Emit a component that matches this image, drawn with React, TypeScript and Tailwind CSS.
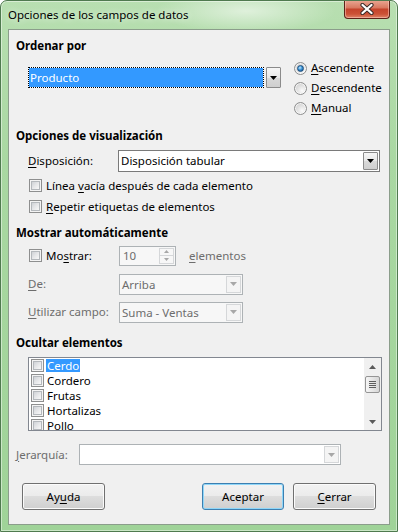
import React from "react";

const Tri = ({ color = "#000", up = false, w = 7, h = 4 }: { color?: string; up?: boolean; w?: number; h?: number }) => (
  <svg width={w} height={h} viewBox={`0 0 ${w} ${h}`} className="block">
    {up ? <path d={`M0 ${h}H${w}L${w / 2} 0Z`} fill={color} /> : <path d={`M0 0H${w}L${w / 2} ${h}Z`} fill={color} />}
  </svg>
);

const U = ({ children }: { children: React.ReactNode }) => <span className="underline underline-offset-[2px]">{children}</span>;

const Check = () => (
  <span className="w-[13px] h-[13px] shrink-0 border border-[#8e8f8f] bg-[#f4f4f4] p-[1px] flex">
    <span className="flex-1 border border-[#b4b8bc] bg-[linear-gradient(135deg,#cfd2d6_0%,#e6e7e9_50%,#f8f8f8_100%)]" />
  </span>
);

const Radio = ({ checked }: { checked?: boolean }) => (
  <span className="w-[13px] h-[13px] shrink-0 rounded-full border border-[#8e8f8f] bg-[radial-gradient(circle_at_65%_70%,#fbfbfb_0%,#e2e2e2_45%,#c6c6c6_100%)] shadow-[inset_0_0_0_1px_rgba(255,255,255,0.7)] flex items-center justify-center">
    {checked && (
      <span className="w-[7px] h-[7px] rounded-full border border-[#1d4f7e] bg-[radial-gradient(circle_at_40%_35%,#c6e8fb_0%,#3b95d8_45%,#0e3f78_100%)]" />
    )}
  </span>
);

const DropBtn = ({ disabled }: { disabled?: boolean }) =>
  disabled ? (
    <span className="w-[15px] h-full shrink-0 border border-[#d5d7d9] bg-[#f4f4f4] flex items-center justify-center">
      <Tri color="#a7a7a7" />
    </span>
  ) : (
    <span className="w-[15px] h-full shrink-0 border border-[#8b8b8b] rounded-[1px] bg-[linear-gradient(180deg,#f6f6f6_0%,#e8e8e8_50%,#d9d9d9_51%,#cfcfcf_100%)] flex items-center justify-center">
      <Tri color="#000" />
    </span>
  );

const Btn = ({ children, def }: { children: React.ReactNode; def?: boolean }) => (
  <div
    className={
      def
        ? "w-[82px] h-[27px] rounded-[3px] border border-[#3c7fb1] shadow-[inset_0_0_0_1px_#8fd6f8] bg-[linear-gradient(180deg,#f2f2f2_0%,#ebebeb_49%,#dddddd_50%,#cfcfcf_100%)] flex items-center justify-center"
        : "w-[83px] h-[27px] rounded-[3px] border border-[#707070] shadow-[inset_0_0_0_1px_#fbfbfb] bg-[linear-gradient(180deg,#f2f2f2_0%,#ebebeb_49%,#dddddd_50%,#cfcfcf_100%)] flex items-center justify-center"
    }
  >
    {children}
  </div>
);

const items = ["Cerdo", "Cordero", "Frutas", "Hortalizas", "Pollo"];

export default function App() {
  return (
    <div className="w-[398px] h-[532px] relative overflow-hidden rounded-t-[7px] border border-[#4f7a4f] shadow-[inset_0_0_0_1px_rgba(255,255,255,0.45)] bg-[radial-gradient(ellipse_90px_22px_at_245px_10px,rgba(255,255,255,0.55),transparent),linear-gradient(180deg,#b8dfb1_0%,#a9d8a2_30%,#9fd398_100%)] font-['Noto_Sans',sans-serif] text-[11.5px] leading-[16px] text-black">
      {/* title bar */}
      <div className="h-[28px] flex items-center pl-[7px]">
        <span className="[text-shadow:0_0_7px_rgba(255,255,255,0.95)]">Opciones de los campos de datos</span>
      </div>

      {/* close button */}
      <div className="absolute left-[343px] top-[-1px] w-[46px] h-[19px] rounded-b-[4px] border border-t-0 border-[#5b2218] shadow-[inset_0_0_0_1px_rgba(255,210,200,0.5)] bg-[linear-gradient(180deg,#eaa996_0%,#d97a62_42%,#c5442c_52%,#cc5236_78%,#de8468_100%)] flex items-center justify-center">
        <svg width="14" height="12" viewBox="0 0 14 12" className="block">
          <path d="M2.5 2L11.5 10M11.5 2L2.5 10" stroke="#3a2a28" strokeWidth="4.2" strokeLinecap="round" />
          <path d="M2.5 2L11.5 10M11.5 2L2.5 10" stroke="#ffffff" strokeWidth="2.3" strokeLinecap="round" />
        </svg>
      </div>

      {/* client area */}
      <div className="ml-[7px] w-[382px] h-[496px] border border-[#8b9d8b] bg-[#f0f0f0] flex flex-col pl-[7px] pt-[8px]">
        <div className="font-bold h-[16px]">Ordenar por</div>

        <div className="flex mt-[4px]">
          <div className="ml-[12px] mt-[9px] w-[253px] h-[21px] flex gap-[2px]">
            <div className="flex-1 border border-dotted border-black bg-white flex">
              <div className="flex-1 bg-[#3399ff] text-white pl-[1px] leading-[19px]">Producto</div>
            </div>
            <DropBtn />
          </div>
          <div className="ml-[13px] flex flex-col">
            <div className="h-[20px] flex items-center gap-[4px]">
              <Radio checked />
              <span><U>A</U>scendente</span>
            </div>
            <div className="h-[20px] flex items-center gap-[4px]">
              <Radio />
              <span><U>D</U>escendente</span>
            </div>
            <div className="h-[20px] flex items-center gap-[4px]">
              <Radio />
              <span><U>M</U>anual</span>
            </div>
          </div>
        </div>

        <div className="font-bold h-[16px] mt-[10px]">Opciones de visualización</div>

        <div className="mt-[6px] h-[22px] flex items-center">
          <span className="ml-[12px] w-[90px]"><U>D</U>isposición:</span>
          <div className="w-[262px] h-[22px] border border-[#7a7a7a] bg-white p-[1px] flex">
            <span className="flex-1 pl-[1px] leading-[18px]">Disposición tabular</span>
            <DropBtn />
          </div>
        </div>

        <div className="mt-[3px] h-[21px] ml-[13px] flex items-center gap-[4px]">
          <Check />
          <span>Línea <U>v</U>acía después de cada elemento</span>
        </div>
        <div className="h-[21px] ml-[13px] flex items-center gap-[4px]">
          <Check />
          <span><U>R</U>epetir etiquetas de elementos</span>
        </div>

        <div className="font-bold h-[16px] mt-[8px]">Mostrar automáticamente</div>

        <div className="mt-[4px] h-[21px] flex items-center">
          <span className="ml-[13px]"><Check /></span>
          <span className="ml-[4px] w-[73px]">Mo<U>s</U>trar:</span>
          <div className="w-[57px] h-[20px] border border-[#adb2b5] bg-[#f7f7f7] flex">
            <span className="flex-1 pl-[3px] leading-[18px] text-[#6d6d6d]">10</span>
            <span className="w-[15px] my-[1px] mr-[1px] flex flex-col border border-[#d5d7d9]">
              <span className="flex-1 flex items-center justify-center border-b border-[#d5d7d9]">
                <Tri up color="#a7a7a7" w={5} h={3} />
              </span>
              <span className="flex-1 flex items-center justify-center">
                <Tri color="#a7a7a7" w={5} h={3} />
              </span>
            </span>
          </div>
          <span className="ml-[13px] text-[#6d6d6d]"><U>e</U>lementos</span>
        </div>

        <div className="mt-[7px] h-[22px] flex items-center">
          <span className="ml-[12px] w-[91px] text-[#6d6d6d]"><U>D</U>e:</span>
          <div className="w-[124px] h-[21px] border border-[#adb2b5] bg-[#f7f7f7] p-[1px] flex">
            <span className="flex-1 pl-[1px] leading-[17px] text-[#6d6d6d]">Arriba</span>
            <DropBtn disabled />
          </div>
        </div>

        <div className="mt-[6px] h-[22px] flex items-center">
          <span className="ml-[12px] w-[91px] text-[#6d6d6d]"><U>U</U>tilizar campo:</span>
          <div className="w-[124px] h-[21px] border border-[#adb2b5] bg-[#f7f7f7] p-[1px] flex">
            <span className="flex-1 pl-[1px] leading-[17px] text-[#6d6d6d]">Suma - Ventas</span>
            <DropBtn disabled />
          </div>
        </div>

        <div className="font-bold h-[16px] mt-[12px]">Ocultar elementos</div>

        <div className="mt-[6px] ml-[12px] w-[354px] h-[74px] border border-[#828790] bg-white flex">
          <div className="flex-1 overflow-hidden flex flex-col">
            {items.map((it, i) => (
              <div key={it} className="h-[15px] shrink-0 flex items-center pl-[2px] gap-[2px]">
                <Check />
                {i === 0 ? (
                  <span className="bg-[#3399ff] text-white px-[1px] leading-[13px]">{it}</span>
                ) : (
                  <span className="px-[1px] leading-[13px]">{it}</span>
                )}
              </div>
            ))}
          </div>
          <div className="w-[17px] h-full bg-[#f0f0f0] flex flex-col">
            <div className="h-[17px] flex items-center justify-center">
              <Tri up color="#5a5a5a" />
            </div>
            <div className="mx-[1px] mt-[1px] h-[17px] rounded-[2px] border border-[#959595] bg-[linear-gradient(90deg,#f5f5f5_0%,#e6e6e6_50%,#d6d6d6_100%)] flex flex-col items-center justify-center gap-[1px]">
              <span className="w-[7px] h-[1px] bg-[#5e5e5e]" />
              <span className="w-[7px] h-[1px] bg-[#5e5e5e]" />
              <span className="w-[7px] h-[1px] bg-[#5e5e5e]" />
              <span className="w-[7px] h-[1px] bg-[#5e5e5e]" />
            </div>
            <div className="flex-1" />
            <div className="h-[17px] flex items-center justify-center">
              <Tri color="#5a5a5a" />
            </div>
          </div>
        </div>

        <div className="mt-[13px] h-[21px] flex items-center">
          <span className="w-[63px] text-[#6d6d6d]"><U>J</U>erarquía:</span>
          <div className="w-[262px] h-[21px] border border-[#adb2b5] bg-white p-[1px] flex">
            <span className="flex-1" />
            <DropBtn disabled />
          </div>
        </div>

        <div className="mt-[18px] flex">
          <div className="ml-[6px]">
            <Btn>
              <span>Ay<U>u</U>da</span>
            </Btn>
          </div>
          <div className="ml-[97px]">
            <Btn def>
              <span>Aceptar</span>
            </Btn>
          </div>
          <div className="ml-[9px]">
            <Btn>
              <span><U>C</U>errar</span>
            </Btn>
          </div>
        </div>
      </div>
    </div>
  );
}
